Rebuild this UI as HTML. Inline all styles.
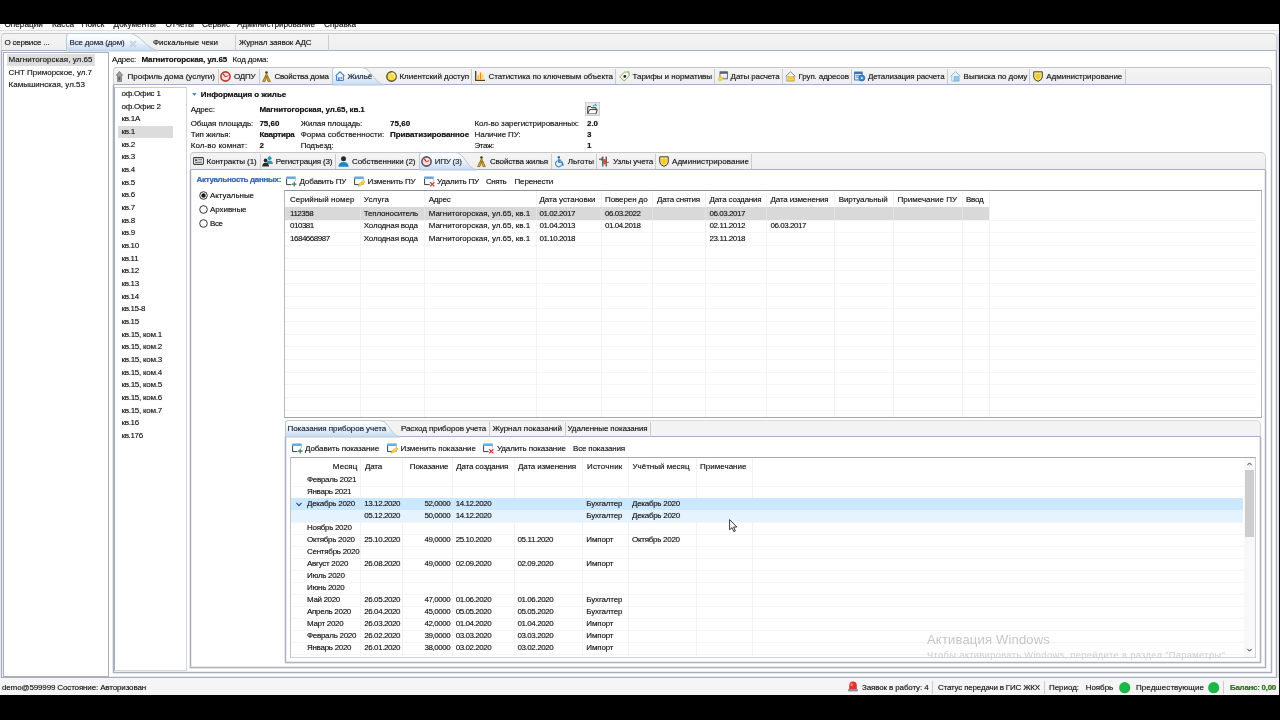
<!DOCTYPE html><html lang="ru"><head><meta charset="utf-8"><title>Все дома</title><style>
*{box-sizing:border-box;margin:0;padding:0}
html,body{width:1280px;height:720px;overflow:hidden;background:#000}
body{font-family:"Liberation Sans",sans-serif;font-size:8px;color:#232323;position:relative}
.a{position:absolute}
.t{position:absolute;white-space:nowrap;line-height:10px;height:10px;text-shadow:0 0 0.7px rgba(30,30,30,0.6)}
.b{font-weight:bold;color:#161616}
.fr{position:absolute;border:1px solid #a9afba;background:#fff}
.strip{position:absolute;background:linear-gradient(#f4f4f4,#eeeeee);border:1px solid #cfd3d9;border-top-color:#c6c6c6;border-bottom:1px solid #a5b1c8}
.sep{position:absolute;width:1px;background:#c9ccd2}
.vl{position:absolute;width:1px;background:#f0f2f4}
.hl{position:absolute;height:1px;background:#f5f5f5}
svg{position:absolute;overflow:visible}
</style></head><body><div id="app" style="position:absolute;left:0;top:0;width:1280px;height:720px;will-change:transform">
<div class="a" style="left:0px;top:24px;width:1279.00px;height:671.00px;background:#f0f0f0"></div>
<div class="a" style="left:1277px;top:34px;width:2.00px;height:661.00px;background:#dcdce6"></div>
<div class="a" style="left:0;top:24px;width:1278px;height:7px;background:#fcfcfc;overflow:hidden">
<div class="t" style="left:4.5px;top:-3.8px;font-size:8.2px">Операции</div>
<div class="t" style="left:52px;top:-3.8px;font-size:8.2px">Касса</div>
<div class="t" style="left:81.6px;top:-3.8px;font-size:8.2px">Поиск</div>
<div class="t" style="left:113.6px;top:-3.8px;font-size:8.2px">Документы</div>
<div class="t" style="left:165.6px;top:-3.8px;font-size:8.2px">Отчеты</div>
<div class="t" style="left:202px;top:-3.8px;font-size:8.2px">Сервис</div>
<div class="t" style="left:237px;top:-3.8px;font-size:8.2px">Администрирование</div>
<div class="t" style="left:324px;top:-3.8px;font-size:8.2px">Справка</div>
</div>
<div class="a" style="left:0px;top:30px;width:1278.00px;height:1.00px;background:#dedede"></div>
<div class="a" style="left:0px;top:31px;width:1278.00px;height:2.00px;background:#f7f7f7"></div>
<div class="strip" style="left:1px;top:33px;width:1276.00px;height:18.00px;border-radius:4px 5px 0 0"></div>
<div class="a" style="left:1px;top:51px;width:1276.00px;height:627.00px;background:#fff;border:1px solid #a9afba;border-top:0;box-shadow:-1px 0 0 0 #e6e8ec,1px 0 0 0 #e6e8ec,0 1px 0 0 #e6e8ec,inset 1px 0 0 0 #e9ebef,inset -1px 0 0 0 #e9ebef,inset 0 -1px 0 0 #e9ebef;"></div>
<div class="t" style="left:4.40px;top:38.00px;;letter-spacing:-0.185px">О сервисе ...</div>
<svg style="left:66px;top:33px" width="94" height="18" viewBox="0 0 94 18"><defs><linearGradient id="g1" x1="0" y1="0" x2="0" y2="1"><stop offset="0" stop-color="#ffffff"/><stop offset="0.4" stop-color="#f3f7fc"/><stop offset="1" stop-color="#c6daf3"/></linearGradient></defs><path d="M0.5 18 L0.5 3 Q0.5 0.5 3 0.5 L64 0.5 C73 0.5 83 17.5 92 17.5 L92 18 Z" fill="url(#g1)" stroke="#b9c7db" stroke-width="1"/></svg>
<div class="t" style="left:69.50px;top:38.00px;color:#25324d;letter-spacing:-0.161px">Все дома (дом)</div>
<svg style="left:129px;top:39.5px" width="8" height="8" viewBox="0 0 8 8"><path d="M1 1 L7 7 M7 1 L1 7" stroke="#a9b5c6" stroke-width="1.4" fill="none"/><path d="M1 1 L7 7 M7 1 L1 7" stroke="#f3f6fa" stroke-width="0.5" fill="none"/></svg>
<div class="t" style="left:153.00px;top:38.00px;;letter-spacing:0.004px">Фискальные чеки</div>
<div class="sep" style="left:235px;top:35px;width:1.00px;height:16.00px;"></div>
<div class="t" style="left:239.00px;top:38.00px;;letter-spacing:-0.147px">Журнал заявок АДС</div>
<div class="sep" style="left:328px;top:35px;width:1.00px;height:16.00px;"></div>
<div class="fr" style="left:3px;top:52px;width:106.00px;height:625.00px;"></div>
<div class="a" style="left:7px;top:54px;width:87.50px;height:11.70px;background:#dedede"></div>
<div class="t" style="left:8.50px;top:55.00px;;letter-spacing:0.039px">Магнитогорская, ул.65</div>
<div class="t" style="left:8.50px;top:67.60px;;letter-spacing:-0.016px">СНТ Приморское, ул.7</div>
<div class="t" style="left:8.50px;top:80.30px;;letter-spacing:0.017px">Камышинская, ул.53</div>
<div class="t" style="left:112.00px;top:55.00px;;letter-spacing:-0.188px">Адрес:</div>
<div class="t b" style="left:141.50px;top:55.00px;;letter-spacing:-0.146px">Магнитогорская, ул.65</div>
<div class="t" style="left:232.50px;top:55.00px;;letter-spacing:-0.125px">Код дома:</div>
<div class="strip" style="left:113px;top:67px;width:1159.00px;height:18.00px;border-radius:4px 5px 0 0"></div>
<div class="a" style="left:113px;top:85px;width:1159.00px;height:588.00px;background:#fff;border:1px solid #a9afba;border-top:0;box-shadow:-1px 0 0 0 #e6e8ec,1px 0 0 0 #e6e8ec,0 1px 0 0 #e6e8ec,inset 1px 0 0 0 #e9ebef,inset -1px 0 0 0 #e9ebef,inset 0 -1px 0 0 #e9ebef;"></div>
<svg style="left:115.5px;top:70.8px" width="7" height="11" viewBox="0 0 7 11"><path d="M3.4 0.4 L6.6 4.2 L5.4 4.2 L5.4 10.4 L1.6 10.4 L1.6 4.2 L0.3 4.2 Z" fill="#a2a2a2" stroke="#6f6f6f" stroke-width="0.8"/><path d="M2.6 5.6h1.7v3.6H2.6z" fill="#5c5c5c"/></svg>
<div class="t" style="left:127.50px;top:71.60px;;letter-spacing:0.007px">Профиль дома (услуги)</div>
<div class="sep" style="left:217.5px;top:69px;width:1.00px;height:15.00px;"></div>
<svg style="left:220px;top:70.8px" width="11" height="11" viewBox="0 0 11 11"><circle cx="5.5" cy="5.5" r="4.6" fill="#fbdede" stroke="#c0392b" stroke-width="1.6"/><path d="M5.5 5.8 L3 2.6" stroke="#d22" stroke-width="1.1"/><path d="M5.5 5.8 L8.3 4.6" stroke="#a33" stroke-width="0.9"/></svg>
<div class="t" style="left:234.00px;top:71.60px;;letter-spacing:-0.199px">ОДПУ</div>
<div class="sep" style="left:258.5px;top:69px;width:1.00px;height:15.00px;"></div>
<svg style="left:262px;top:70.6px" width="9" height="11" viewBox="0 0 9 11"><circle cx="4.5" cy="1.5" r="1.3" fill="#4a3a10"/><path d="M4.5 2.4 L0.6 10.6 L3 10.6 L4.5 6 L6 10.6 L8.4 10.6 Z" fill="#d8ac2e" stroke="#7a5c14" stroke-width="0.7"/><path d="M3.2 5.6h2.6" stroke="#7a5c14" stroke-width="0.8"/></svg>
<div class="t" style="left:274.40px;top:71.60px;;letter-spacing:-0.156px">Свойства дома</div>
<svg style="left:332px;top:67px" width="54" height="18" viewBox="0 0 54 18"><defs><linearGradient id="g2" x1="0" y1="0" x2="0" y2="1"><stop offset="0" stop-color="#ffffff"/><stop offset="0.4" stop-color="#f3f7fc"/><stop offset="1" stop-color="#c6daf3"/></linearGradient></defs><path d="M0.5 18 L0.5 3 Q0.5 0.5 3 0.5 L30 0.5 C39 0.5 43 17.5 52 17.5 L52 18 Z" fill="url(#g2)" stroke="#b9c7db" stroke-width="1"/></svg>
<svg style="left:334.8px;top:71.2px" width="10" height="10" viewBox="0 0 10 10"><path d="M0.6 5 L5 0.8 L9.4 5" fill="none" stroke="#4f86c6" stroke-width="1.1"/><path d="M1.6 4.6 L1.6 9.4 L8.4 9.4 L8.4 4.6" fill="#eaf2fb" stroke="#3f74b4" stroke-width="1"/><path d="M3.2 6.2h1.4v3.2H3.2z M5.6 6.2h1.4v1.6H5.6z" fill="#3f74b4"/></svg>
<div class="t" style="left:347.50px;top:71.60px;color:#25324d;letter-spacing:-0.128px">Жильё</div>
<svg style="left:385.8px;top:70.6px" width="11" height="11" viewBox="0 0 11 11"><circle cx="5.5" cy="5.5" r="4.7" fill="#f7dc4a" stroke="#5e4f24" stroke-width="1.4"/><path d="M5.5 2 A3.5 3.5 0 0 1 8.6 7" fill="none" stroke="#fff6b8" stroke-width="1.3"/></svg>
<div class="t" style="left:399.50px;top:71.60px;;letter-spacing:-0.036px">Клиентский доступ</div>
<div class="sep" style="left:471px;top:69px;width:1.00px;height:15.00px;"></div>
<svg style="left:475.2px;top:70.8px" width="10" height="10" viewBox="0 0 10 10"><path d="M0.7 0 L0.7 9.3 L10 9.3" fill="none" stroke="#5a3a1a" stroke-width="1.3"/><path d="M2.6 4v4.4h1.4V4z" fill="#f4b63a"/><path d="M4.8 1.5v6.9h1.4V1.5z" fill="#e8861f"/><path d="M7 3.2v5.2h1.4V3.2z" fill="#f7d45a"/></svg>
<div class="t" style="left:488.50px;top:71.60px;;letter-spacing:-0.033px">Статистика по ключевым объекта</div>
<div class="sep" style="left:615px;top:69px;width:1.00px;height:15.00px;"></div>
<svg style="left:619px;top:70.8px" width="11" height="11" viewBox="0 0 11 11"><path d="M0.8 5.8 L5.5 1.2 L10 0.8 L10 5 L5.3 10 Z" fill="#f4f9ee" stroke="#7da453" stroke-width="0.9"/><circle cx="5.8" cy="5.4" r="1.4" fill="#222"/></svg>
<div class="t" style="left:632.50px;top:71.60px;;letter-spacing:-0.049px">Тарифы и нормативы</div>
<div class="sep" style="left:713.7px;top:69px;width:1.00px;height:15.00px;"></div>
<svg style="left:717px;top:70.6px" width="11" height="11" viewBox="0 0 11 11"><rect x="3" y="0.8" width="7.4" height="7" fill="#fff" stroke="#555d6b" stroke-width="0.9"/><rect x="3" y="0.8" width="7.4" height="2" fill="#555d6b"/><path d="M4 5h5.4M4 6.6h5.4" stroke="#b6bcc6" stroke-width="0.6"/><path d="M0.5 7 L4.5 5 L6 9 L2 10.8 Z" fill="#f5cf4a"/></svg>
<div class="t" style="left:730.60px;top:71.60px;;letter-spacing:-0.126px">Даты расчета</div>
<div class="sep" style="left:782px;top:69px;width:1.00px;height:15.00px;"></div>
<svg style="left:785.4px;top:70.6px" width="11" height="11" viewBox="0 0 11 11"><path d="M0.6 5.3 L5.5 0.8 L10.4 5.3" fill="none" stroke="#8c8c8c" stroke-width="1"/><path d="M1.8 5 L1.8 10 L9.2 10 L9.2 5" fill="#fff" stroke="#9a9a9a" stroke-width="0.9"/><rect x="3" y="5.6" width="6" height="4" fill="#f8d568" stroke="#e0a920" stroke-width="0.6"/><path d="M3 5.6 L6 8 L9 5.6" fill="none" stroke="#e0a920" stroke-width="0.6"/></svg>
<div class="t" style="left:798.50px;top:71.60px;;letter-spacing:-0.118px">Груп. адресов</div>
<div class="sep" style="left:850.7px;top:69px;width:1.00px;height:15.00px;"></div>
<svg style="left:854px;top:70.6px" width="11" height="11" viewBox="0 0 11 11"><rect x="0.6" y="1" width="7.6" height="8" fill="#dbe9f8" stroke="#3b73b7" stroke-width="0.9"/><rect x="0.6" y="1" width="7.6" height="2" fill="#3b73b7"/><path d="M1.8 4.6h5M1.8 6.2h5" stroke="#3b73b7" stroke-width="0.7"/><circle cx="7.8" cy="7" r="3" fill="#2f8fe0" stroke="#1f5fa8" stroke-width="0.7"/><circle cx="7.8" cy="7" r="1.1" fill="#d9ecff"/></svg>
<div class="t" style="left:868.00px;top:71.60px;;letter-spacing:-0.167px">Детализация расчета</div>
<div class="sep" style="left:947px;top:69px;width:1.00px;height:15.00px;"></div>
<svg style="left:949.8px;top:70.6px" width="11" height="11" viewBox="0 0 11 11"><path d="M0.6 5.3 L5.5 0.8 L10.4 5.3" fill="none" stroke="#8fb7d9" stroke-width="1"/><path d="M1.8 5 L1.8 10 L9.2 10 L9.2 5" fill="#f4f9fd" stroke="#9bbfdc" stroke-width="0.9"/><rect x="4" y="5.4" width="4.6" height="4.6" fill="#8ecbf0" stroke="#5ca7d6" stroke-width="0.5"/></svg>
<div class="t" style="left:963.60px;top:71.60px;;letter-spacing:-0.024px">Выписка по дому</div>
<div class="sep" style="left:1029.3px;top:69px;width:1.00px;height:15.00px;"></div>
<svg style="left:1033px;top:70.8px" width="10" height="11" viewBox="0 0 10 11"><path d="M0.7 0.8 L9.3 0.8 L9.3 6 Q9.3 8.8 5 10.4 Q0.7 8.8 0.7 6 Z" fill="#f6e27a" stroke="#4a4430" stroke-width="1"/><path d="M2.6 2.8 L7.4 2.8 L7.4 5.8 Q7.4 7.4 5 8.4 Q2.6 7.4 2.6 5.8 Z" fill="#f2c928"/></svg>
<div class="t" style="left:1046.30px;top:71.60px;;letter-spacing:-0.017px">Администрирование</div>
<div class="sep" style="left:1124.5px;top:69px;width:1.00px;height:15.00px;"></div>
<div class="a" style="left:114px;top:86.5px;width:73.00px;height:584.00px;background:#fff;border:1px solid #d4d8de;border-left-color:#a9afba;border-top-color:#c3ccd8"></div>
<div class="a" style="left:118px;top:125.5px;width:54.50px;height:12.10px;background:#dcdcdc"></div>
<div class="t" style="left:121.50px;top:88.90px;;letter-spacing:-0.234px">оф.Офис 1</div>
<div class="t" style="left:121.50px;top:101.57px;;letter-spacing:-0.234px">оф.Офис 2</div>
<div class="t" style="left:121.50px;top:114.23px;;letter-spacing:-0.238px">кв.1А</div>
<div class="t" style="left:121.50px;top:126.90px;;letter-spacing:-0.251px">кв.1</div>
<div class="t" style="left:121.50px;top:139.57px;;letter-spacing:-0.251px">кв.2</div>
<div class="t" style="left:121.50px;top:152.24px;;letter-spacing:-0.251px">кв.3</div>
<div class="t" style="left:121.50px;top:164.90px;;letter-spacing:-0.251px">кв.4</div>
<div class="t" style="left:121.50px;top:177.57px;;letter-spacing:-0.251px">кв.5</div>
<div class="t" style="left:121.50px;top:190.24px;;letter-spacing:-0.251px">кв.6</div>
<div class="t" style="left:121.50px;top:202.90px;;letter-spacing:-0.251px">кв.7</div>
<div class="t" style="left:121.50px;top:215.57px;;letter-spacing:-0.251px">кв.8</div>
<div class="t" style="left:121.50px;top:228.24px;;letter-spacing:-0.251px">кв.9</div>
<div class="t" style="left:121.50px;top:240.90px;;letter-spacing:-0.299px">кв.10</div>
<div class="t" style="left:121.50px;top:253.57px;;letter-spacing:-0.286px">кв.11</div>
<div class="t" style="left:121.50px;top:266.24px;;letter-spacing:-0.299px">кв.12</div>
<div class="t" style="left:121.50px;top:278.90px;;letter-spacing:-0.299px">кв.13</div>
<div class="t" style="left:121.50px;top:291.57px;;letter-spacing:-0.299px">кв.14</div>
<div class="t" style="left:121.50px;top:304.24px;;letter-spacing:-0.325px">кв.15-8</div>
<div class="t" style="left:121.50px;top:316.91px;;letter-spacing:-0.299px">кв.15</div>
<div class="t" style="left:121.50px;top:329.57px;;letter-spacing:-0.266px">кв.15, ком.1</div>
<div class="t" style="left:121.50px;top:342.24px;;letter-spacing:-0.266px">кв.15, ком.2</div>
<div class="t" style="left:121.50px;top:354.91px;;letter-spacing:-0.266px">кв.15, ком.3</div>
<div class="t" style="left:121.50px;top:367.57px;;letter-spacing:-0.266px">кв.15, ком.4</div>
<div class="t" style="left:121.50px;top:380.24px;;letter-spacing:-0.266px">кв.15, ком.5</div>
<div class="t" style="left:121.50px;top:392.91px;;letter-spacing:-0.266px">кв.15, ком.6</div>
<div class="t" style="left:121.50px;top:405.58px;;letter-spacing:-0.266px">кв.15, ком.7</div>
<div class="t" style="left:121.50px;top:418.24px;;letter-spacing:-0.299px">кв.16</div>
<div class="t" style="left:121.50px;top:430.91px;;letter-spacing:-0.331px">кв.176</div>
<div class="a" style="left:190px;top:170px;width:1076.00px;height:498.00px;background:#fff;border:1px solid #a9afba;border-top:0;box-shadow:-1px 0 0 0 #e6e8ec,1px 0 0 0 #e6e8ec,0 1px 0 0 #e6e8ec,inset 1px 0 0 0 #e9ebef,inset -1px 0 0 0 #e9ebef,inset 0 -1px 0 0 #e9ebef;"></div>
<svg style="left:191.5px;top:93.2px" width="5" height="3" viewBox="0 0 5 3"><path d="M0.2 0.2 L4.6 0.2 L2.4 2.8 Z" fill="#2b74c7"/></svg>
<div class="t b" style="left:200.70px;top:90.20px;;letter-spacing:-0.043px">Информация о жилье</div>
<div class="t" style="left:190.70px;top:105.20px;;letter-spacing:-0.188px">Адрес:</div>
<div class="t b" style="left:259.40px;top:105.20px;;letter-spacing:-0.122px">Магнитогорская, ул.65, кв.1</div>
<div class="t" style="left:190.70px;top:118.60px;;letter-spacing:-0.109px">Общая площадь:</div>
<div class="t b" style="left:259.40px;top:118.60px;;letter-spacing:0.034px">75,60</div>
<div class="t" style="left:300.70px;top:118.60px;;letter-spacing:-0.118px">Жилая площадь:</div>
<div class="t b" style="left:390.00px;top:118.60px;;letter-spacing:0.034px">75,60</div>
<div class="t" style="left:474.50px;top:118.60px;;letter-spacing:-0.073px">Кол-во зарегистрированных:</div>
<div class="t b" style="left:587.00px;top:118.60px;;letter-spacing:-0.042px">2.0</div>
<div class="t" style="left:190.70px;top:129.60px;;letter-spacing:-0.078px">Тип жилья:</div>
<div class="t b" style="left:259.40px;top:129.60px;;letter-spacing:-0.239px">Квартира</div>
<div class="t" style="left:300.70px;top:129.60px;;letter-spacing:-0.030px">Форма собственности:</div>
<div class="t b" style="left:390.00px;top:129.60px;;letter-spacing:-0.094px">Приватизированное</div>
<div class="t" style="left:474.50px;top:129.60px;;letter-spacing:-0.142px">Наличие ПУ:</div>
<div class="t b" style="left:587.00px;top:129.60px;;letter-spacing:-0.490px">3</div>
<div class="t" style="left:190.70px;top:141.40px;;letter-spacing:0.092px">Кол-во комнат:</div>
<div class="t b" style="left:259.40px;top:141.40px;;letter-spacing:-0.490px">2</div>
<div class="t" style="left:300.70px;top:141.40px;;letter-spacing:-0.209px">Подъезд:</div>
<div class="t" style="left:474.50px;top:141.40px;;letter-spacing:-0.432px">Этаж:</div>
<div class="t b" style="left:587.00px;top:141.40px;;letter-spacing:-0.490px">1</div>
<div class="a" style="left:585px;top:102px;width:14.50px;height:14.00px;background:#e9e9e9;border:1px solid #cecece"></div>
<svg style="left:587px;top:103.5px" width="11" height="11" viewBox="0 0 11 11"><path d="M0.8 2.6 L3.6 2.6 L4.6 3.8 L9 3.8 L9 9.6 L0.8 9.6 Z" fill="#f7f7f7" stroke="#2a2a2a" stroke-width="1"/><path d="M0.8 9.6 L2.6 5.6 L10.2 5.6 L9 9.6" fill="#fff" stroke="#2a2a2a" stroke-width="0.9"/><path d="M6 2.6 Q7 0.6 9.4 0.8 M9.4 0.8 L8 0 M9.4 0.8 L8.6 2.2" stroke="#39b7c9" stroke-width="1.1" fill="none"/></svg>
<div class="strip" style="left:190px;top:152px;width:1076.00px;height:18.00px;border-radius:4px 5px 0 0"></div>
<svg style="left:193px;top:157.4px" width="11" height="8" viewBox="0 0 11 8"><rect x="0.6" y="0.6" width="9.8" height="6.8" rx="0.8" fill="#fff" stroke="#3a3f48" stroke-width="1.1"/><rect x="2" y="2.3" width="2.4" height="1.6" fill="#3a3f48"/><path d="M5.4 2.8h3.6M2 5.2h7" stroke="#3a3f48" stroke-width="0.9"/></svg>
<div class="t" style="left:206.60px;top:157.20px;;letter-spacing:-0.084px">Контракты (1)</div>
<div class="sep" style="left:259.5px;top:154px;width:1.00px;height:15.00px;"></div>
<svg style="left:262px;top:156.2px" width="11" height="11" viewBox="0 0 11 11"><circle cx="7.6" cy="2.2" r="1.9" fill="#2b9bb8"/><path d="M4.6 8 Q4.6 4.6 7.6 4.6 Q10.8 4.6 10.8 8 Z" fill="#2b9bb8"/><circle cx="3.6" cy="4.4" r="1.9" fill="#2a2a2a"/><path d="M0.2 10.6 Q0.2 6.8 3.6 6.8 Q7 6.8 7 10.6 Z" fill="#2a2a2a"/></svg>
<div class="t" style="left:275.80px;top:157.20px;;letter-spacing:-0.151px">Регистрация (3)</div>
<div class="sep" style="left:335px;top:154px;width:1.00px;height:15.00px;"></div>
<svg style="left:338.2px;top:156.2px" width="11" height="11" viewBox="0 0 11 11"><circle cx="5.5" cy="2.8" r="2.5" fill="#2a2a2a"/><path d="M0.4 10.8 Q0.4 6 5.5 6 Q10.6 6 10.6 10.8 Z" fill="#1e88c7"/></svg>
<div class="t" style="left:352.00px;top:157.20px;;letter-spacing:-0.054px">Собственники (2)</div>
<svg style="left:418.5px;top:152px" width="59.5" height="18" viewBox="0 0 59.5 18"><defs><linearGradient id="g3" x1="0" y1="0" x2="0" y2="1"><stop offset="0" stop-color="#ffffff"/><stop offset="0.4" stop-color="#f3f7fc"/><stop offset="1" stop-color="#c6daf3"/></linearGradient></defs><path d="M0.5 18 L0.5 3 Q0.5 0.5 3 0.5 L36.5 0.5 C45.5 0.5 48.5 17.5 57.5 17.5 L57.5 18 Z" fill="url(#g3)" stroke="#b9c7db" stroke-width="1"/></svg>
<svg style="left:420.5px;top:155.6px" width="11" height="11" viewBox="0 0 11 11"><circle cx="5.5" cy="5.5" r="4.6" fill="#fbdede" stroke="#5a5560" stroke-width="1.6"/><path d="M5.5 5.8 L3 2.6" stroke="#d22" stroke-width="1.1"/><path d="M5.5 5.8 L8.3 4.6" stroke="#a33" stroke-width="0.9"/></svg>
<div class="t" style="left:434.70px;top:157.20px;color:#25324d;letter-spacing:-0.228px">ИПУ (3)</div>
<svg style="left:477px;top:155.8px" width="9" height="11" viewBox="0 0 9 11"><circle cx="4.5" cy="1.5" r="1.3" fill="#4a3a10"/><path d="M4.5 2.4 L0.6 10.6 L3 10.6 L4.5 6 L6 10.6 L8.4 10.6 Z" fill="#d8ac2e" stroke="#7a5c14" stroke-width="0.7"/><path d="M3.2 5.6h2.6" stroke="#7a5c14" stroke-width="0.8"/></svg>
<div class="t" style="left:490.00px;top:157.20px;;letter-spacing:-0.167px">Свойства жилья</div>
<div class="sep" style="left:551px;top:154px;width:1.00px;height:15.00px;"></div>
<svg style="left:554.8px;top:156px" width="9" height="11" viewBox="0 0 9 11"><circle cx="3.8" cy="1.3" r="1.2" fill="#1f6fb5"/><path d="M3.8 2.6 L3.8 6.2 L7 6.2 L8.2 9.8" fill="none" stroke="#1f6fb5" stroke-width="1.2"/><path d="M3.8 4.2h2.6" stroke="#1f6fb5" stroke-width="1"/><path d="M2.6 4.8 A3.1 3.1 0 1 0 6.6 8.6" fill="none" stroke="#2a8fd0" stroke-width="1.1"/></svg>
<div class="t" style="left:567.70px;top:157.20px;;letter-spacing:0.073px">Льготы</div>
<div class="sep" style="left:596px;top:154px;width:1.00px;height:15.00px;"></div>
<svg style="left:599.4px;top:156px" width="11" height="11" viewBox="0 0 11 11"><path d="M0 3.2h3.4" stroke="#333" stroke-width="1"/><path d="M3.8 0.4v10.2M7.2 0.4v10.2" stroke="#3a3a3a" stroke-width="1.1"/><path d="M2.2 1.8l1.4 1.4-1.4 1.4" fill="none" stroke="#333" stroke-width="0.8"/><ellipse cx="5.5" cy="5.6" rx="1.5" ry="2.8" fill="#e8413a"/><path d="M7.6 6.4l2.2 0" stroke="#e8413a" stroke-width="1.2"/></svg>
<div class="t" style="left:613.00px;top:157.20px;;letter-spacing:-0.123px">Узлы учета</div>
<div class="sep" style="left:655px;top:154px;width:1.00px;height:15.00px;"></div>
<svg style="left:658.8px;top:156px" width="10" height="11" viewBox="0 0 10 11"><path d="M0.7 0.8 L9.3 0.8 L9.3 6 Q9.3 8.8 5 10.4 Q0.7 8.8 0.7 6 Z" fill="#f6e27a" stroke="#4a4430" stroke-width="1"/><path d="M2.6 2.8 L7.4 2.8 L7.4 5.8 Q7.4 7.4 5 8.4 Q2.6 7.4 2.6 5.8 Z" fill="#f2c928"/></svg>
<div class="t" style="left:672.00px;top:157.20px;;letter-spacing:0.041px">Администрирование</div>
<div class="sep" style="left:751px;top:154px;width:1.00px;height:15.00px;"></div>
<div class="t b" style="left:196.50px;top:175.20px;color:#3a6fc9;letter-spacing:-0.323px">Актуальность данных:</div>
<svg style="left:286px;top:176.2px" width="11" height="11" viewBox="0 0 11 11"><rect x="0.6" y="1" width="8.6" height="7.6" fill="#fff" stroke="#aab3c0" stroke-width="0.8"/><rect x="0.3" y="0.7" width="9.2" height="2.2" fill="#5aa9e8"/><path d="M0.6 2.9 L0.6 8.6 L6 8.6" fill="none" stroke="#3f4652" stroke-width="1"/><rect x="5.4" y="5.2" width="5.4" height="5.4" fill="#fff"/><path d="M8.2 5.8v4.6M5.9 8.1h4.6" stroke="#2a8040" stroke-width="1.1"/></svg>
<div class="t" style="left:299.50px;top:176.60px;;letter-spacing:-0.157px">Добавить ПУ</div>
<svg style="left:354.3px;top:176.2px" width="11" height="11" viewBox="0 0 11 11"><rect x="0.6" y="1" width="8.6" height="7.6" fill="#fff" stroke="#aab3c0" stroke-width="0.8"/><rect x="0.3" y="0.7" width="9.2" height="2.2" fill="#5aa9e8"/><path d="M0.6 2.9 L0.6 8.6 L6 8.6" fill="none" stroke="#3f4652" stroke-width="1"/><path d="M4 10.4 L5 7.8 L9.4 4.4 L11 6 L6.6 9.6 Z" fill="#f4cf45" stroke="#d9a520" stroke-width="0.5"/></svg>
<div class="t" style="left:367.60px;top:176.60px;;letter-spacing:-0.104px">Изменить ПУ</div>
<svg style="left:423.6px;top:176.2px" width="11" height="11" viewBox="0 0 11 11"><rect x="0.6" y="1" width="8.6" height="7.6" fill="#fff" stroke="#aab3c0" stroke-width="0.8"/><rect x="0.3" y="0.7" width="9.2" height="2.2" fill="#5aa9e8"/><path d="M0.6 2.9 L0.6 8.6 L6 8.6" fill="none" stroke="#3f4652" stroke-width="1"/><rect x="5.6" y="5.6" width="5.2" height="5.2" fill="#fff"/><path d="M6.2 6.2l4.2 4.2M10.4 6.2l-4.2 4.2" stroke="#e03a2e" stroke-width="1.3"/></svg>
<div class="t" style="left:437.00px;top:176.60px;;letter-spacing:-0.161px">Удалить ПУ</div>
<div class="t" style="left:486.00px;top:176.60px;;letter-spacing:-0.412px">Снять</div>
<div class="t" style="left:514.50px;top:176.60px;;letter-spacing:-0.157px">Перенести</div>
<svg style="left:199px;top:190.5px" width="9" height="9" viewBox="0 0 9 9"><circle cx="4.5" cy="4.5" r="3.8" fill="#fff" stroke="#333" stroke-width="1"/><circle cx="4.5" cy="4.5" r="2.2" fill="#1c1c1c"/></svg>
<div class="t" style="left:210.00px;top:190.80px;;letter-spacing:-0.050px">Актуальные</div>
<svg style="left:199px;top:204.5px" width="9" height="9" viewBox="0 0 9 9"><circle cx="4.5" cy="4.5" r="3.8" fill="#fff" stroke="#333" stroke-width="1"/></svg>
<div class="t" style="left:210.00px;top:204.80px;;letter-spacing:-0.066px">Архивные</div>
<svg style="left:199px;top:218.5px" width="9" height="9" viewBox="0 0 9 9"><circle cx="4.5" cy="4.5" r="3.8" fill="#fff" stroke="#333" stroke-width="1"/></svg>
<div class="t" style="left:210.00px;top:218.60px;;letter-spacing:-0.432px">Все</div>
<div class="a" style="left:284px;top:190px;width:978.00px;height:227.50px;background:#fff;border:1px solid #b9b9b9;border-top-color:#929292;border-bottom-color:#a4a4a4"></div>
<div class="a" style="left:285px;top:207.3px;width:704.00px;height:12.30px;background:#d9d9d9"></div>
<div class="hl" style="left:285px;top:220px;width:972.00px;height:1.00px;"></div>
<div class="hl" style="left:285px;top:232px;width:972.00px;height:1.00px;"></div>
<div class="hl" style="left:285px;top:245px;width:972.00px;height:1.00px;"></div>
<div class="hl" style="left:285px;top:258px;width:972.00px;height:1.00px;"></div>
<div class="hl" style="left:285px;top:270px;width:972.00px;height:1.00px;"></div>
<div class="hl" style="left:285px;top:283px;width:972.00px;height:1.00px;"></div>
<div class="hl" style="left:285px;top:296px;width:972.00px;height:1.00px;"></div>
<div class="hl" style="left:285px;top:308px;width:972.00px;height:1.00px;"></div>
<div class="hl" style="left:285px;top:321px;width:972.00px;height:1.00px;"></div>
<div class="hl" style="left:285px;top:334px;width:972.00px;height:1.00px;"></div>
<div class="hl" style="left:285px;top:346px;width:972.00px;height:1.00px;"></div>
<div class="hl" style="left:285px;top:359px;width:972.00px;height:1.00px;"></div>
<div class="hl" style="left:285px;top:372px;width:972.00px;height:1.00px;"></div>
<div class="hl" style="left:285px;top:384px;width:972.00px;height:1.00px;"></div>
<div class="hl" style="left:285px;top:397px;width:972.00px;height:1.00px;"></div>
<div class="hl" style="left:285px;top:410px;width:972.00px;height:1.00px;"></div>
<div class="vl" style="left:360px;top:191px;width:1.00px;height:225.50px;"></div>
<div class="vl" style="left:424px;top:191px;width:1.00px;height:225.50px;"></div>
<div class="vl" style="left:536px;top:191px;width:1.00px;height:225.50px;"></div>
<div class="vl" style="left:601px;top:191px;width:1.00px;height:225.50px;"></div>
<div class="vl" style="left:652px;top:191px;width:1.00px;height:225.50px;"></div>
<div class="vl" style="left:705px;top:191px;width:1.00px;height:225.50px;"></div>
<div class="vl" style="left:766px;top:191px;width:1.00px;height:225.50px;"></div>
<div class="vl" style="left:834px;top:191px;width:1.00px;height:225.50px;"></div>
<div class="vl" style="left:893px;top:191px;width:1.00px;height:225.50px;"></div>
<div class="vl" style="left:962px;top:191px;width:1.00px;height:225.50px;"></div>
<div class="vl" style="left:989px;top:191px;width:1.00px;height:225.50px;"></div>
<div class="a" style="left:360px;top:207.3px;width:1.00px;height:12.30px;background:#e3e3e3"></div>
<div class="a" style="left:424px;top:207.3px;width:1.00px;height:12.30px;background:#e3e3e3"></div>
<div class="a" style="left:536px;top:207.3px;width:1.00px;height:12.30px;background:#e3e3e3"></div>
<div class="a" style="left:601px;top:207.3px;width:1.00px;height:12.30px;background:#e3e3e3"></div>
<div class="a" style="left:652px;top:207.3px;width:1.00px;height:12.30px;background:#e3e3e3"></div>
<div class="a" style="left:705px;top:207.3px;width:1.00px;height:12.30px;background:#e3e3e3"></div>
<div class="a" style="left:766px;top:207.3px;width:1.00px;height:12.30px;background:#e3e3e3"></div>
<div class="a" style="left:834px;top:207.3px;width:1.00px;height:12.30px;background:#e3e3e3"></div>
<div class="a" style="left:893px;top:207.3px;width:1.00px;height:12.30px;background:#e3e3e3"></div>
<div class="a" style="left:962px;top:207.3px;width:1.00px;height:12.30px;background:#e3e3e3"></div>
<div class="t" style="left:290.00px;top:194.60px;;letter-spacing:0.054px">Серийный номер</div>
<div class="t" style="left:363.70px;top:194.60px;;letter-spacing:0.182px">Услуга</div>
<div class="t" style="left:428.70px;top:194.60px;;letter-spacing:-0.181px">Адрес</div>
<div class="t" style="left:539.50px;top:194.60px;;letter-spacing:-0.069px">Дата установки</div>
<div class="t" style="left:605.00px;top:194.60px;;letter-spacing:-0.097px">Поверен до</div>
<div class="t" style="left:657.00px;top:194.60px;;letter-spacing:-0.196px">Дата снятия</div>
<div class="t" style="left:709.50px;top:194.60px;;letter-spacing:-0.171px">Дата создания</div>
<div class="t" style="left:770.50px;top:194.60px;;letter-spacing:-0.151px">Дата изменения</div>
<div class="t" style="left:838.70px;top:194.60px;;letter-spacing:-0.061px">Виртуальный</div>
<div class="t" style="left:897.50px;top:194.60px;;letter-spacing:0.011px">Примечание ПУ</div>
<div class="t" style="left:966.00px;top:194.60px;;letter-spacing:-0.234px">Ввод</div>
<div class="t" style="left:290.00px;top:208.70px;;letter-spacing:-0.479px">112358</div>
<div class="t" style="left:363.70px;top:208.70px;;letter-spacing:-0.152px">Теплоноситель</div>
<div class="t" style="left:428.70px;top:208.70px;;letter-spacing:-0.021px">Магнитогорская, ул.65, кв.1</div>
<div class="t" style="left:539.50px;top:208.70px;;letter-spacing:-0.455px">01.02.2017</div>
<div class="t" style="left:605.00px;top:208.70px;;letter-spacing:-0.455px">06.03.2022</div>
<div class="t" style="left:709.50px;top:208.70px;;letter-spacing:-0.455px">06.03.2017</div>
<div class="t" style="left:290.00px;top:221.37px;;letter-spacing:-0.490px">010381</div>
<div class="t" style="left:363.70px;top:221.37px;;letter-spacing:-0.164px">Холодная вода</div>
<div class="t" style="left:428.70px;top:221.37px;;letter-spacing:-0.021px">Магнитогорская, ул.65, кв.1</div>
<div class="t" style="left:539.50px;top:221.37px;;letter-spacing:-0.455px">01.04.2013</div>
<div class="t" style="left:605.00px;top:221.37px;;letter-spacing:-0.455px">01.04.2018</div>
<div class="t" style="left:709.50px;top:221.37px;;letter-spacing:-0.395px">02.11.2012</div>
<div class="t" style="left:770.50px;top:221.37px;;letter-spacing:-0.455px">06.03.2017</div>
<div class="t" style="left:290.00px;top:234.03px;;letter-spacing:-0.489px">1684668987</div>
<div class="t" style="left:363.70px;top:234.03px;;letter-spacing:-0.164px">Холодная вода</div>
<div class="t" style="left:428.70px;top:234.03px;;letter-spacing:-0.021px">Магнитогорская, ул.65, кв.1</div>
<div class="t" style="left:539.50px;top:234.03px;;letter-spacing:-0.455px">01.10.2018</div>
<div class="t" style="left:709.50px;top:234.03px;;letter-spacing:-0.395px">23.11.2018</div>
<div class="strip" style="left:285px;top:420px;width:976.00px;height:17.00px;border-radius:4px 5px 0 0;background:#f3f3f3;border-top-color:#dadada"></div>
<div class="a" style="left:285px;top:437px;width:976.00px;height:226.00px;background:#fff;border:1px solid #aeb3bb;border-top:0;box-shadow:-1px 0 0 0 #e6e8ec,1px 0 0 0 #e6e8ec,0 1px 0 0 #e6e8ec,inset 1px 0 0 0 #e9ebef,inset -1px 0 0 0 #e9ebef,inset 0 -1px 0 0 #e9ebef;"></div>
<svg style="left:285px;top:420px" width="117" height="17" viewBox="0 0 117 17"><defs><linearGradient id="g4" x1="0" y1="0" x2="0" y2="1"><stop offset="0" stop-color="#ffffff"/><stop offset="0.4" stop-color="#f3f7fc"/><stop offset="1" stop-color="#c6daf3"/></linearGradient></defs><path d="M0.5 17 L0.5 3 Q0.5 0.5 3 0.5 L95 0.5 C104 0.5 106 16.5 115 16.5 L115 17 Z" fill="url(#g4)" stroke="#b9c7db" stroke-width="1"/></svg>
<div class="t" style="left:287.50px;top:424.20px;color:#25324d;letter-spacing:-0.047px">Показания приборов учета</div>
<div class="t" style="left:401.00px;top:424.20px;;letter-spacing:-0.077px">Расход приборов учета</div>
<div class="sep" style="left:489px;top:421.5px;width:1.00px;height:15.00px;"></div>
<div class="t" style="left:492.50px;top:424.20px;;letter-spacing:-0.013px">Журнал показаний</div>
<div class="sep" style="left:564.5px;top:421.5px;width:1.00px;height:15.00px;"></div>
<div class="t" style="left:567.50px;top:424.20px;;letter-spacing:-0.111px">Удаленные показания</div>
<div class="sep" style="left:650px;top:421.5px;width:1.00px;height:15.00px;"></div>
<svg style="left:291.6px;top:443.4px" width="11" height="11" viewBox="0 0 11 11"><rect x="0.6" y="1" width="8.6" height="7.6" fill="#fff" stroke="#aab3c0" stroke-width="0.8"/><rect x="0.3" y="0.7" width="9.2" height="2.2" fill="#5aa9e8"/><path d="M0.6 2.9 L0.6 8.6 L6 8.6" fill="none" stroke="#3f4652" stroke-width="1"/><rect x="5.4" y="5.2" width="5.4" height="5.4" fill="#fff"/><path d="M8.2 5.8v4.6M5.9 8.1h4.6" stroke="#2a8040" stroke-width="1.1"/></svg>
<div class="t" style="left:305.00px;top:443.90px;;letter-spacing:-0.103px">Добавить показание</div>
<svg style="left:387px;top:443.4px" width="11" height="11" viewBox="0 0 11 11"><rect x="0.6" y="1" width="8.6" height="7.6" fill="#fff" stroke="#aab3c0" stroke-width="0.8"/><rect x="0.3" y="0.7" width="9.2" height="2.2" fill="#5aa9e8"/><path d="M0.6 2.9 L0.6 8.6 L6 8.6" fill="none" stroke="#3f4652" stroke-width="1"/><path d="M4 10.4 L5 7.8 L9.4 4.4 L11 6 L6.6 9.6 Z" fill="#f4cf45" stroke="#d9a520" stroke-width="0.5"/></svg>
<div class="t" style="left:400.50px;top:443.90px;;letter-spacing:-0.071px">Изменить показание</div>
<svg style="left:483px;top:443.4px" width="11" height="11" viewBox="0 0 11 11"><rect x="0.6" y="1" width="8.6" height="7.6" fill="#fff" stroke="#aab3c0" stroke-width="0.8"/><rect x="0.3" y="0.7" width="9.2" height="2.2" fill="#5aa9e8"/><path d="M0.6 2.9 L0.6 8.6 L6 8.6" fill="none" stroke="#3f4652" stroke-width="1"/><rect x="5.6" y="5.6" width="5.2" height="5.2" fill="#fff"/><path d="M6.2 6.2l4.2 4.2M10.4 6.2l-4.2 4.2" stroke="#e03a2e" stroke-width="1.3"/></svg>
<div class="t" style="left:497.00px;top:443.90px;;letter-spacing:-0.132px">Удалить показание</div>
<div class="t" style="left:573.00px;top:443.90px;;letter-spacing:-0.167px">Все показания</div>
<div class="a" style="left:290px;top:457px;width:966.00px;height:200.50px;background:#fff;border:1px solid #cfd2d6;border-top-color:#a9a9a9;border-left-color:#bfc3c9"></div>
<div class="hl" style="left:290.5px;top:485.5px;width:952.50px;height:1.00px;"></div>
<div class="hl" style="left:290.5px;top:521.5px;width:952.50px;height:1.00px;"></div>
<div class="hl" style="left:290.5px;top:533.5px;width:952.50px;height:1.00px;"></div>
<div class="hl" style="left:290.5px;top:545.5px;width:952.50px;height:1.00px;"></div>
<div class="hl" style="left:290.5px;top:557.5px;width:952.50px;height:1.00px;"></div>
<div class="hl" style="left:290.5px;top:569.5px;width:952.50px;height:1.00px;"></div>
<div class="hl" style="left:290.5px;top:581.5px;width:952.50px;height:1.00px;"></div>
<div class="hl" style="left:290.5px;top:593.5px;width:952.50px;height:1.00px;"></div>
<div class="hl" style="left:290.5px;top:605.5px;width:952.50px;height:1.00px;"></div>
<div class="hl" style="left:290.5px;top:617.5px;width:952.50px;height:1.00px;"></div>
<div class="hl" style="left:290.5px;top:629.5px;width:952.50px;height:1.00px;"></div>
<div class="hl" style="left:290.5px;top:641.5px;width:952.50px;height:1.00px;"></div>
<div class="hl" style="left:290.5px;top:653.5px;width:952.50px;height:1.00px;"></div>
<div class="vl" style="left:360px;top:458px;width:1.00px;height:197.50px;"></div>
<div class="vl" style="left:402px;top:458px;width:1.00px;height:197.50px;"></div>
<div class="vl" style="left:452px;top:458px;width:1.00px;height:197.50px;"></div>
<div class="vl" style="left:514px;top:458px;width:1.00px;height:197.50px;"></div>
<div class="vl" style="left:582px;top:458px;width:1.00px;height:197.50px;"></div>
<div class="vl" style="left:628px;top:458px;width:1.00px;height:197.50px;"></div>
<div class="vl" style="left:696px;top:458px;width:1.00px;height:197.50px;"></div>
<div class="vl" style="left:752px;top:458px;width:1.00px;height:197.50px;"></div>
<div class="a" style="left:291px;top:498px;width:952.00px;height:12.00px;background:#cce8ff"></div>
<div class="a" style="left:291px;top:510px;width:952.00px;height:12.00px;background:#e5f3ff"></div>
<div class="t" style="right:922.70px;top:462.00px;;letter-spacing:0.075px">Месяц</div>
<div class="t" style="left:365.00px;top:462.00px;;letter-spacing:-0.180px">Дата</div>
<div class="t" style="right:831.70px;top:462.00px;;letter-spacing:-0.132px">Показание</div>
<div class="t" style="left:456.20px;top:462.00px;;letter-spacing:-0.171px">Дата создания</div>
<div class="t" style="left:518.00px;top:462.00px;;letter-spacing:-0.151px">Дата изменения</div>
<div class="t" style="left:587.00px;top:462.00px;;letter-spacing:0.168px">Источник</div>
<div class="t" style="left:632.50px;top:462.00px;;letter-spacing:-0.007px">Учётный месяц</div>
<div class="t" style="left:700.00px;top:462.00px;;letter-spacing:0.019px">Примечание</div>
<div class="t" style="left:307.00px;top:475.00px;;letter-spacing:-0.278px">Февраль 2021</div>
<div class="t" style="left:307.00px;top:487.00px;;letter-spacing:-0.288px">Январь 2021</div>
<div class="t" style="left:307.00px;top:499.00px;;letter-spacing:-0.275px">Декабрь 2020</div>
<div class="t" style="left:364.30px;top:499.00px;;letter-spacing:-0.435px">13.12.2020</div>
<div class="t" style="right:829.70px;top:499.00px;;letter-spacing:-0.446px">52,0000</div>
<div class="t" style="left:455.70px;top:499.00px;;letter-spacing:-0.435px">14.12.2020</div>
<div class="t" style="left:586.30px;top:499.00px;;letter-spacing:-0.145px">Бухгалтер</div>
<div class="t" style="left:632.00px;top:499.00px;;letter-spacing:-0.275px">Декабрь 2020</div>
<div class="t" style="left:364.30px;top:511.00px;;letter-spacing:-0.435px">05.12.2020</div>
<div class="t" style="right:829.70px;top:511.00px;;letter-spacing:-0.446px">50,0000</div>
<div class="t" style="left:455.70px;top:511.00px;;letter-spacing:-0.435px">14.12.2020</div>
<div class="t" style="left:586.30px;top:511.00px;;letter-spacing:-0.145px">Бухгалтер</div>
<div class="t" style="left:632.00px;top:511.00px;;letter-spacing:-0.275px">Декабрь 2020</div>
<div class="t" style="left:307.00px;top:523.00px;;letter-spacing:-0.289px">Ноябрь 2020</div>
<div class="t" style="left:307.00px;top:535.00px;;letter-spacing:-0.274px">Октябрь 2020</div>
<div class="t" style="left:364.30px;top:535.00px;;letter-spacing:-0.435px">25.10.2020</div>
<div class="t" style="right:829.70px;top:535.00px;;letter-spacing:-0.446px">49,0000</div>
<div class="t" style="left:455.70px;top:535.00px;;letter-spacing:-0.435px">25.10.2020</div>
<div class="t" style="left:517.50px;top:535.00px;;letter-spacing:-0.375px">05.11.2020</div>
<div class="t" style="left:586.30px;top:535.00px;;letter-spacing:-0.163px">Импорт</div>
<div class="t" style="left:632.00px;top:535.00px;;letter-spacing:-0.274px">Октябрь 2020</div>
<div class="t" style="left:307.00px;top:547.00px;;letter-spacing:-0.266px">Сентябрь 2020</div>
<div class="t" style="left:307.00px;top:559.00px;;letter-spacing:-0.277px">Август 2020</div>
<div class="t" style="left:364.30px;top:559.00px;;letter-spacing:-0.435px">26.08.2020</div>
<div class="t" style="right:829.70px;top:559.00px;;letter-spacing:-0.446px">49,0000</div>
<div class="t" style="left:455.70px;top:559.00px;;letter-spacing:-0.435px">02.09.2020</div>
<div class="t" style="left:517.50px;top:559.00px;;letter-spacing:-0.435px">02.09.2020</div>
<div class="t" style="left:586.30px;top:559.00px;;letter-spacing:-0.163px">Импорт</div>
<div class="t" style="left:307.00px;top:571.00px;;letter-spacing:-0.324px">Июль 2020</div>
<div class="t" style="left:307.00px;top:583.00px;;letter-spacing:-0.324px">Июнь 2020</div>
<div class="t" style="left:307.00px;top:595.00px;;letter-spacing:-0.344px">Май 2020</div>
<div class="t" style="left:364.30px;top:595.00px;;letter-spacing:-0.435px">26.05.2020</div>
<div class="t" style="right:829.70px;top:595.00px;;letter-spacing:-0.446px">47,0000</div>
<div class="t" style="left:455.70px;top:595.00px;;letter-spacing:-0.435px">01.06.2020</div>
<div class="t" style="left:517.50px;top:595.00px;;letter-spacing:-0.435px">01.06.2020</div>
<div class="t" style="left:586.30px;top:595.00px;;letter-spacing:-0.145px">Бухгалтер</div>
<div class="t" style="left:307.00px;top:607.00px;;letter-spacing:-0.287px">Апрель 2020</div>
<div class="t" style="left:364.30px;top:607.00px;;letter-spacing:-0.435px">26.04.2020</div>
<div class="t" style="right:829.70px;top:607.00px;;letter-spacing:-0.446px">45,0000</div>
<div class="t" style="left:455.70px;top:607.00px;;letter-spacing:-0.435px">05.05.2020</div>
<div class="t" style="left:517.50px;top:607.00px;;letter-spacing:-0.435px">05.05.2020</div>
<div class="t" style="left:586.30px;top:607.00px;;letter-spacing:-0.145px">Бухгалтер</div>
<div class="t" style="left:307.00px;top:619.00px;;letter-spacing:-0.319px">Март 2020</div>
<div class="t" style="left:364.30px;top:619.00px;;letter-spacing:-0.435px">26.03.2020</div>
<div class="t" style="right:829.70px;top:619.00px;;letter-spacing:-0.446px">42,0000</div>
<div class="t" style="left:455.70px;top:619.00px;;letter-spacing:-0.435px">01.04.2020</div>
<div class="t" style="left:517.50px;top:619.00px;;letter-spacing:-0.435px">01.04.2020</div>
<div class="t" style="left:586.30px;top:619.00px;;letter-spacing:-0.163px">Импорт</div>
<div class="t" style="left:307.00px;top:631.00px;;letter-spacing:-0.278px">Февраль 2020</div>
<div class="t" style="left:364.30px;top:631.00px;;letter-spacing:-0.435px">26.02.2020</div>
<div class="t" style="right:829.70px;top:631.00px;;letter-spacing:-0.446px">39,0000</div>
<div class="t" style="left:455.70px;top:631.00px;;letter-spacing:-0.435px">03.03.2020</div>
<div class="t" style="left:517.50px;top:631.00px;;letter-spacing:-0.435px">03.03.2020</div>
<div class="t" style="left:586.30px;top:631.00px;;letter-spacing:-0.163px">Импорт</div>
<div class="t" style="left:307.00px;top:643.00px;;letter-spacing:-0.288px">Январь 2020</div>
<div class="t" style="left:364.30px;top:643.00px;;letter-spacing:-0.435px">26.01.2020</div>
<div class="t" style="right:829.70px;top:643.00px;;letter-spacing:-0.446px">38,0000</div>
<div class="t" style="left:455.70px;top:643.00px;;letter-spacing:-0.435px">03.02.2020</div>
<div class="t" style="left:517.50px;top:643.00px;;letter-spacing:-0.435px">03.02.2020</div>
<div class="t" style="left:586.30px;top:643.00px;;letter-spacing:-0.163px">Импорт</div>
<svg style="left:296px;top:502.3px" width="6" height="5" viewBox="0 0 6 5"><path d="M0.5 0.8 L3 3.6 L5.5 0.8" fill="none" stroke="#2b4672" stroke-width="1.1"/></svg>
<div class="a" style="left:1244px;top:458px;width:11.00px;height:198.50px;background:#f8f8f8"></div>
<div class="a" style="left:1245px;top:470px;width:9.00px;height:67.00px;background:#cdcdcd"></div>
<svg style="left:1246.5px;top:462.3px" width="5" height="4" viewBox="0 0 5 4"><path d="M0.4 3.2 L2.5 0.9 L4.6 3.2" fill="none" stroke="#3a3a3a" stroke-width="1"/></svg>
<svg style="left:1246.5px;top:648px" width="5" height="4" viewBox="0 0 5 4"><path d="M0.4 0.9 L2.5 3.2 L4.6 0.9" fill="none" stroke="#3a3a3a" stroke-width="1"/></svg>
<div class="a" style="left:0px;top:678px;width:1279.00px;height:17.00px;background:#f5f5f5"></div>
<div class="t" style="left:2.00px;top:682.60px;;letter-spacing:-0.142px">demo@599999 Состояние: Авторизован</div>
<svg style="left:848px;top:681.4px" width="10" height="11" viewBox="0 0 10 11"><path d="M1.2 8 L1.2 4.6 Q1.2 0.6 5 0.6 Q8.8 0.6 8.8 4.6 L8.8 8 Z" fill="#e5312b"/><ellipse cx="3.6" cy="3.6" rx="1.2" ry="1.6" fill="#f58a85"/><rect x="0.2" y="8" width="9.6" height="2.4" fill="#8a8f96"/></svg>
<div class="t" style="left:862.00px;top:682.60px;;letter-spacing:-0.129px">Заявок в работу: 4</div>
<div class="sep" style="left:932px;top:681px;width:1.00px;height:13.00px;"></div>
<div class="t" style="left:938.00px;top:682.60px;;letter-spacing:-0.191px">Статус передачи в ГИС ЖКХ</div>
<div class="sep" style="left:1043.5px;top:681px;width:1.00px;height:13.00px;"></div>
<div class="t" style="left:1049.00px;top:682.60px;;letter-spacing:-0.040px">Период:</div>
<div class="t" style="left:1085.70px;top:682.60px;;letter-spacing:-0.044px">Ноябрь</div>
<svg style="left:1119px;top:681.8px" width="11.4" height="11.4" viewBox="0 0 11.4 11.4"><circle cx="5.7" cy="5.7" r="5.6" fill="#1eb648"/></svg>
<div class="t" style="left:1136.00px;top:682.60px;;letter-spacing:0.054px">Предшествующие</div>
<svg style="left:1208.3px;top:681.8px" width="11.4" height="11.4" viewBox="0 0 11.4 11.4"><circle cx="5.7" cy="5.7" r="5.6" fill="#1eb648"/></svg>
<div class="sep" style="left:1223px;top:681px;width:1.00px;height:13.00px;"></div>
<div class="t b" style="left:1230.00px;top:682.60px;color:#33801f;letter-spacing:-0.289px">Баланс: 0,00</div>
<div class="t" style="left:927.00px;top:635.00px;color:#c6c6c6;text-shadow:none;line-height:16px;height:16px;margin-top:-3px;font-size:13px;letter-spacing:0.188px">Активация Windows</div>
<div class="t" style="left:927.00px;top:650.30px;color:#d0d0d0;text-shadow:none;line-height:12px;height:12px;margin-top:-1px;font-size:9.3px;letter-spacing:0.341px">Чтобы активировать Windows, перейдите в раздел &quot;Параметры&quot;.</div>
<svg style="left:729px;top:519px" width="9" height="14" viewBox="0 0 9 14"><path d="M0.6 0.6 L0.6 10.8 L3 8.6 L4.8 12.6 L6.4 11.9 L4.6 8 L7.8 8 Z" fill="#fff" stroke="#222" stroke-width="0.9"/></svg>
<div class="a" style="left:1279px;top:24px;width:1.00px;height:671.00px;background:#050505"></div>
</div></body></html>
